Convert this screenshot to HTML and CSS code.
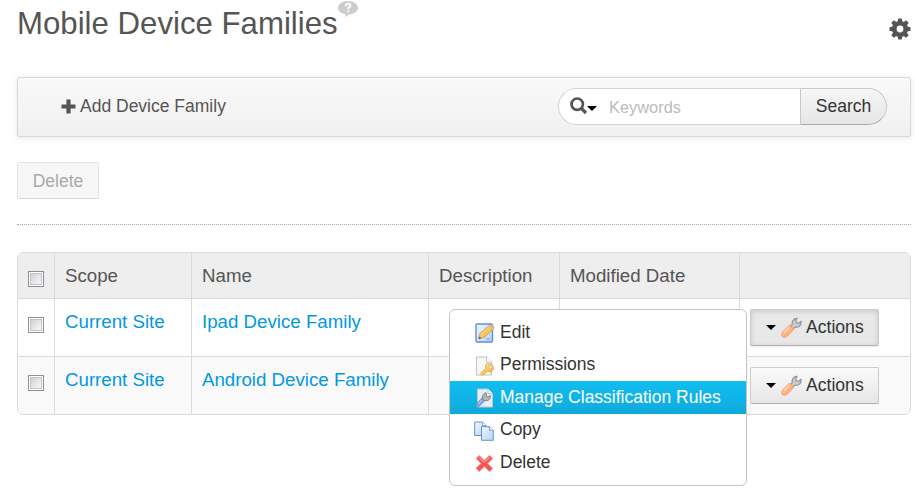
FILE: index.html
```html
<!DOCTYPE html>
<html lang="en">
<head>
<meta charset="utf-8">
<title>Mobile Device Families</title>
<link rel="stylesheet" href="styles.css">
</head>
<body>
<svg class="defs" width="0" height="0">
  <defs>
    <linearGradient id="gold" x1="0" y1="0" x2="1" y2="1"><stop offset="0" stop-color="#ffe9a0"/><stop offset="1" stop-color="#e9a92c"/></linearGradient>
    <linearGradient id="blue" x1="0" y1="0" x2="1" y2="1"><stop offset="0" stop-color="#f2f8ff"/><stop offset="1" stop-color="#b5d2f5"/></linearGradient>
    <linearGradient id="orange" x1="0" y1="0" x2="1" y2="1"><stop offset="0" stop-color="#ffc9a2"/><stop offset="1" stop-color="#ff9f66"/></linearGradient>
    <symbol id="wrench" viewBox="0 0 21 21">
      <path d="M9.2 9.7 11.3 7.6C10.5 4.5 12.5 1.5 16 1.4L14.8 3.8 15.3 6 17.8 6.2 20 4.4C20.6 8 18 10.7 14.2 10.1L11.8 12.2Z" fill="#ccc" stroke="#959595" stroke-width="1.2"/>
      <path d="M8.6 8 13 12.4 6.3 19.2Q3.6 21.6 1.3 19.8 -.6 17.6 1.6 15Z" fill="url(#orange)" stroke="#f3a070" stroke-width=".8"/>
      <path d="M8.4 10.6 3.4 15.8" stroke="#ffe1c9" stroke-width="1.3" fill="none"/>
    </symbol>
  </defs>
</svg>
<main class="page">
  <header class="heading">
    <h1>Mobile Device Families</h1>
    <svg class="help" viewBox="0 0 20 16"><path d="M10 0C15.5 0 20 3 20 6.8S15.5 13.4 10.8 13.4L7.3 16 7.6 13C3 12.6 0 10 0 6.8 0 3 4.5 0 10 0Z" fill="#ccc"/><path d="M7.7 5Q7.9 2.8 10.2 2.8 12.4 2.8 12.4 4.8 12.4 6.2 10.3 7V8.2M10.3 9.6V11.2" fill="none" stroke="#fff" stroke-width="1.9"/></svg>
    <svg class="gear" viewBox="-11 -11 22 22"><g fill="#555"><path fill-rule="evenodd" d="M0-8A8 8 0 1 1 0 8 8 8 0 1 1 0-8ZM0-3.4A3.4 3.4 0 1 0 0 3.4 3.4 3.4 0 1 0 0-3.4Z"/><path id="tooth" d="M-2.4-7-1.8-10.5H1.8L2.4-7Z"/><use href="#tooth" transform="rotate(45)"/><use href="#tooth" transform="rotate(90)"/><use href="#tooth" transform="rotate(135)"/><use href="#tooth" transform="rotate(180)"/><use href="#tooth" transform="rotate(225)"/><use href="#tooth" transform="rotate(270)"/><use href="#tooth" transform="rotate(315)"/></g></svg>
  </header>
  <nav class="toolbar">
    <a class="add"><svg viewBox="0 0 15 15"><path d="M7.5.5V14.5M.5 7.5H14.5" stroke="#555" stroke-width="4.2"/></svg>Add Device Family</a>
    <form class="search">
      <div class="field">
        <svg class="lens" viewBox="0 0 18 18"><circle cx="7.2" cy="7.2" r="5.7" fill="none" stroke="#555" stroke-width="2.7"/><path d="M11.4 11.4 16 16" stroke="#555" stroke-width="3.2"/></svg>
        <i class="caret"></i>
        <span class="placeholder">Keywords</span>
      </div>
      <button class="go" type="button">Search</button>
    </form>
  </nav>
  <button class="delete" type="button" disabled>Delete</button>
  <hr>
  <section class="table-wrap">
    <table>
      <colgroup><col class="c1"><col class="c2"><col class="c3"><col class="c4"><col class="c5"><col class="c6"></colgroup>
      <thead>
        <tr><th class="pick"><i class="check"></i></th><th>Scope</th><th>Name</th><th>Description</th><th>Modified Date</th><th></th></tr>
      </thead>
      <tbody>
        <tr><td class="pick"><i class="check"></i></td><td><a>Current Site</a></td><td><a>Ipad Device Family</a></td><td></td><td></td>
          <td><button class="actions open" type="button"><i class="caret"></i><svg><use href="#wrench"/></svg>Actions</button></td></tr>
        <tr><td class="pick"><i class="check"></i></td><td><a>Current Site</a></td><td><a>Android Device Family</a></td><td></td><td></td>
          <td><button class="actions" type="button"><i class="caret"></i><svg><use href="#wrench"/></svg>Actions</button></td></tr>
      </tbody>
    </table>
    <ul class="menu">
      <li><svg viewBox="0 0 20 20"><rect x="1" y="1" width="16.5" height="18" rx="1" fill="url(#blue)" stroke="#5a93d8" stroke-width="1.4"/><path d="M11 16H15" stroke="#7da9df"/><path d="M3.6 16 5 10.4 14.4 2.4Q18.8 1.2 19 5.4L9.4 14.2Z" fill="url(#gold)" stroke="#c9923f" stroke-width=".8"/><path d="M3.6 16 4.3 13.4 6.2 15.1Z" fill="#555"/><path d="M14.6 2.4Q18.8 1.4 19 5.3L17.3 6.9 13.2 3.5Z" fill="#e9b58f"/></svg>Edit</li>
      <li><svg viewBox="0 0 20 20"><path d="M1.5 1H11.5L16.5 6V19H1.5Z" fill="#f7f7f7" stroke="#c2c2c2"/><path d="M11.5 1V6H16.5" fill="#fff" stroke="#c8c8c8"/><path d="M12.5 7.2 17 8.5 18.8 12.8 16 16.2 12.3 15.4 8.7 19H6V16.5L10.9 12.2 10.5 9.2Z" fill="url(#gold)" stroke="#d9ac58" stroke-width=".8"/><circle cx="15.6" cy="11.2" r="1" fill="#fff4cd"/></svg>Permissions</li>
      <li class="active"><svg viewBox="0 0 20 20"><path d="M2.5 1H13L17.5 5.5V19H2.5Z" fill="#e8eef5" stroke="#b9cad8"/><path d="M13 1V5.5H17.5" fill="#fff" stroke="#b7c5d1"/><path d="M7.3 9.5 2.2 15.2Q-.5 18.3 1 19.2 2.7 19.8 4.5 18L10.2 12.4Z" fill="#7fa6df" stroke="#4f82c4" stroke-width=".6"/><path d="M8 12 7.3 7.8 10.2 4.8 11.3 5V8.4L13.6 8.8 15 7.2Q16 11.3 12.3 12.7L9.7 12.5Z" fill="#b5b5b5" stroke="#858585"/><path d="M7 12 3.5 16" stroke="#c9dcf7"/></svg>Manage Classification Rules</li>
      <li class="copy"><svg viewBox="0 0 20 20"><path d="M.7 1H8.5L12 4.5V14.5H.7Z" fill="url(#blue)" stroke="#6292d2"/><path d="M7.5 5.7H15.5L19.3 9.3V19.3H7.5Z" fill="url(#blue)" stroke="#6292d2"/><path d="M15.5 5.7V9.3H19.3M8.5 1V4.5H12" fill="#fff" stroke="#79a4de"/></svg>Copy</li>
      <li><svg viewBox="0 0 20 20"><path d="M4.2 2.4 9.2 7.3 14.5 2.4 17.7 5.6 12.6 10.5 17.7 15.4 14.5 18.6 9.3 13.6 4.2 18.6 1 15.3 6 10.5 1.2 5.5Z" fill="#f45656" stroke="#f58d8d" stroke-width=".9"/><path d="M4.2 4.5 9.3 9.3 14.5 4.5" fill="none" stroke="#ff8b86" stroke-width="1.5"/></svg>Delete</li>
    </ul>
  </section>
</main>
</body>
</html>
```
FILE: styles.css
```css
* { box-sizing: border-box; }
body { margin: 0; min-height: 489px; background: #fff; color: #555; font: 17.5px/24px "Liberation Sans", Arial, sans-serif; }
button { font: inherit; margin: 0; }
.defs { display: block; }
.page { width: 894px; margin-left: 17px; }

.heading { display: flex; align-items: flex-start; height: 77px; }
h1 { margin: 5px 0 0; font-size: 31.2px; line-height: 38px; font-weight: normal; white-space: nowrap; }
.help { width: 20px; height: 16px; margin-top: 1px; }
.gear { width: 22px; height: 22px; margin: 18px 0 0 auto; }

.toolbar { display: flex; align-items: center; justify-content: space-between; height: 60px; padding: 0 23px 2px 43px; border: 1px solid #d9d9d9; border-radius: 2px; background: linear-gradient(#f9f9f9, #f0f0f0); box-shadow: 0 1px 6px rgba(0, 0, 0, .1); }
.add { display: flex; align-items: center; gap: 4px; color: #555; }
.add svg { width: 15px; height: 15px; }
.search { display: flex; height: 37px; margin: 0; }
.field { display: flex; align-items: center; width: 242px; padding-left: 11px; background: #fff; border: 1px solid #d4d4d4; border-right: 0; border-radius: 19px 0 0 19px; }
.lens { width: 18px; height: 18px; }
.caret { width: 0; height: 0; border: 5px solid transparent; border-top-color: #000; border-bottom: 0; }
.field .caret { margin: 4px 12px 0 -1px; }
.placeholder { padding-top: 1px; color: #bbb; font-size: 16.4px; }
.go { width: 87px; padding: 0 0 1px; color: #333; border: 1px solid #c8c8c8; border-bottom-color: #aaa; border-radius: 0 19px 19px 0; background: linear-gradient(#f6f6f6, #e6e6e6); }

.delete { display: block; width: 82px; height: 37px; margin-top: 25px; padding: 0; color: #aaa; border: 1px solid #e4e4e4; border-bottom-color: #d8d8d8; border-radius: 2px; background: #f7f7f7; }
hr { height: 0; margin: 25px 0 27px; border: 0; border-top: 1px dotted #aaa; }

.table-wrap { position: relative; border: 1px solid #dbdbdb; border-radius: 6px; }
table { width: 892px; table-layout: fixed; border-spacing: 0; border-radius: 5px; overflow: hidden; }
.c1 { width: 37px; }
.c2 { width: 137px; }
.c3 { width: 237px; }
.c4 { width: 131px; }
.c5 { width: 180px; }
.c6 { width: 170px; }
th, td { padding: 0 0 0 10px; font-size: 18.7px; text-align: left; vertical-align: top; font-weight: normal; border-right: 1px solid #dbdbdb; border-bottom: 1px solid #dbdbdb; }
th:last-child, td:last-child { border-right: 0; }
th { height: 46px; padding-top: 11px; background: #eee; }
td { height: 58px; padding-top: 11px; }
tr:last-child td { height: 57px; border-bottom: 0; }
tbody tr:nth-child(2) { background: #f9f9f9; }
td a { color: #0098e1; }
.pick { padding-top: 18px; }
.check { display: block; width: 16px; height: 16px; border: 1px solid #8e8f8f; background: linear-gradient(135deg, #c3c8d0, #f4f4f4 75%); box-shadow: inset 0 0 0 1px #fff, inset 0 0 0 2px #c0c3c8; }

.actions { display: flex; align-items: center; width: 129px; height: 37px; margin-top: -1px; padding: 0 0 1px 15px; font-size: 17.6px; color: #333; border: 1px solid #ccc; border-bottom-color: #b3b3b3; border-radius: 2px; background: linear-gradient(#fafafa, #e6e6e6); }
.actions.open { background: #e8e8e8; box-shadow: inset 0 1px 5px rgba(0, 0, 0, .15), 0 1px 1px rgba(0, 0, 0, .08); }
.actions svg { width: 21px; height: 21px; margin: 0 4px 0 5px; }

.menu { position: absolute; left: 431px; top: 56px; width: 298px; height: 177px; margin: 0; padding: 6px 0; list-style: none; color: #333; background: #fff; border: 1px solid #c4c4c4; border-radius: 6px; }
.menu li { display: flex; align-items: center; height: 32.5px; padding: 0 0 1px 26px; white-space: nowrap; }
.menu svg { width: 20px; height: 20px; margin: 3px 5px 0 -1px; }
.menu .copy svg { margin-left: -2px; margin-right: 6px; }
.menu .active { color: #fff; background: linear-gradient(#11bdf0, #0faadc); }
```
